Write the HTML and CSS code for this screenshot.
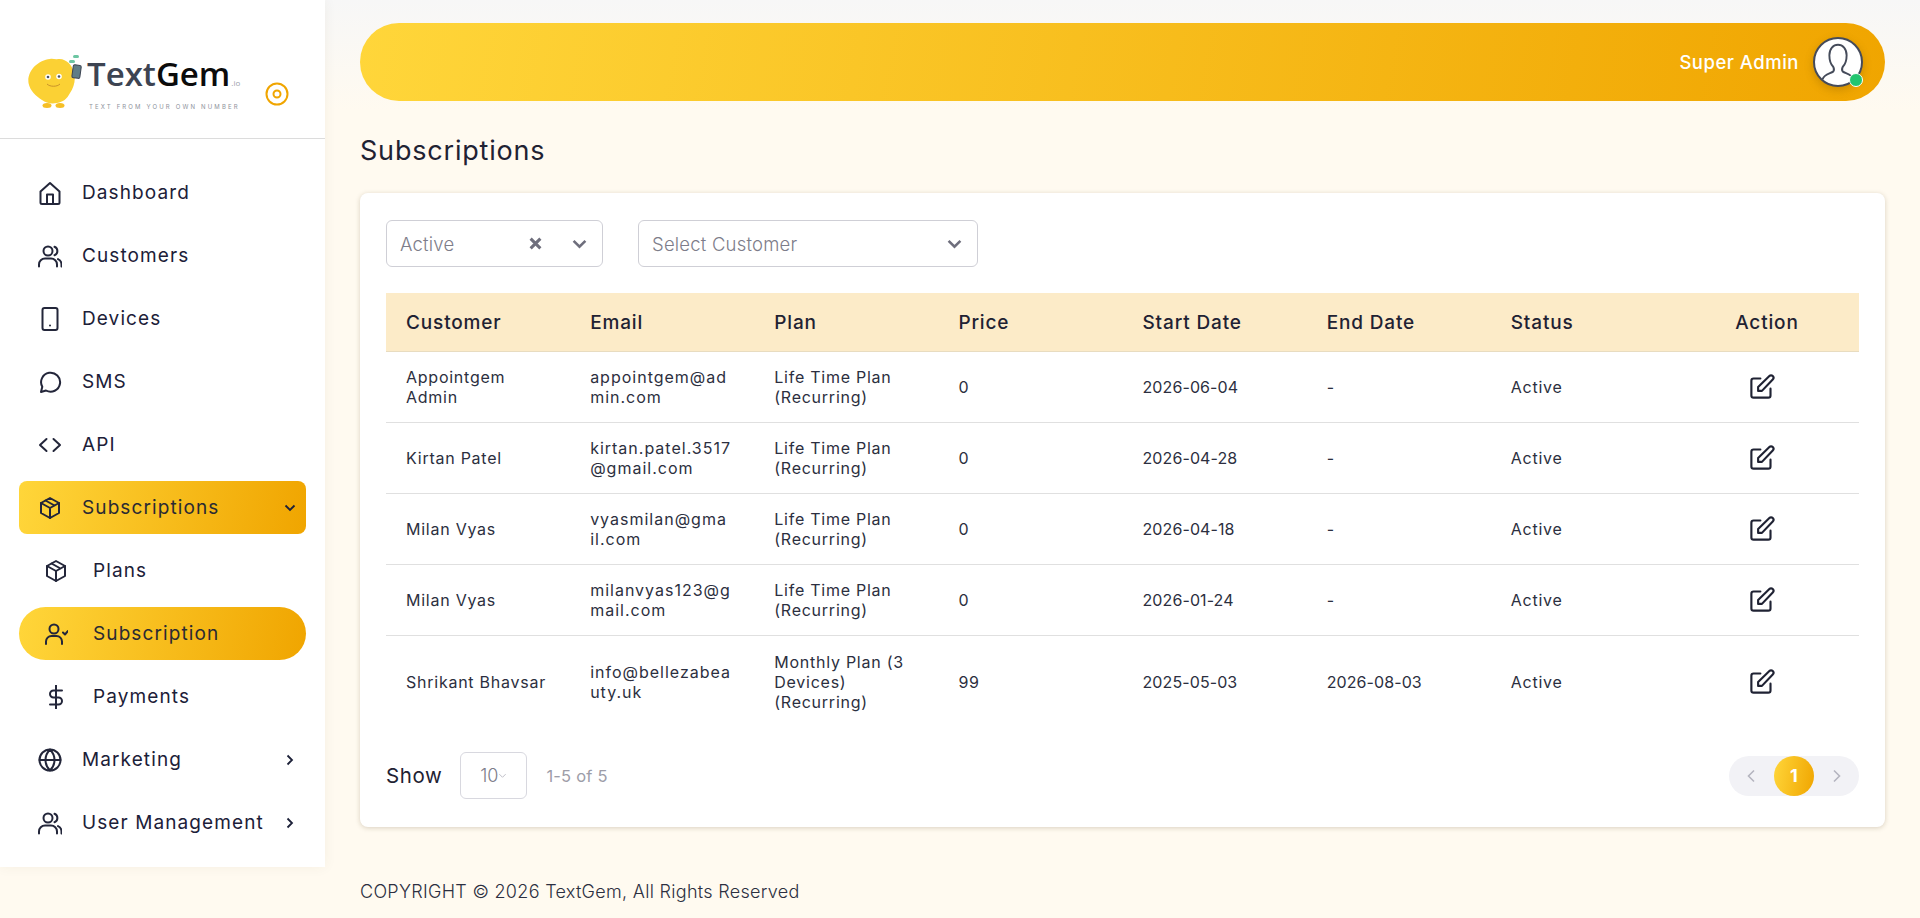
FILE: index.html
```html
<!DOCTYPE html>
<html>
<head>
    <title>Subscriptions - TextGem</title>
    <link rel="stylesheet" href="styles.css">
</head>
<body>
    <svg class="icon-defs" width="0" height="0">
        <symbol id="i-box" viewBox="0 0 24 24"><path d="M12 2l9 5v10l-9 5-9-5V7z"/><path d="M3 7l9 5 9-5M12 12v10M7.500 4.500l9 5"/></symbol>
        <symbol id="i-users" viewBox="0 0 24 24"><circle cx="10" cy="7" r="4.500"/><path d="M1 22.500v-2a6 6 0 0 1 6-6h6a6 6 0 0 1 6 6v2M16.500 2.800a4.500 4.500 0 0 1 0 8.400M23.500 22.500v-2a6 6 0 0 0-3.500-5.400"/></symbol>
        <symbol id="i-edit" viewBox="0 0 24 24"><path d="M11 4H5a2 2 0 0 0-2 2v13a2 2 0 0 0 2 2h13a2 2 0 0 0 2-2v-6"/><path d="M9 15v-3.500L19 1.800a2 2 0 0 1 3 3L12.400 15z"/></symbol>
    </svg>

    <div class="layout">
        <aside class="sidebar">
            <div class="brand">
                <div class="logo">
                    <svg class="mascot" viewBox="0 0 54 54">
                        <path class="mascot-body" d="M22 4c3-1 5 1 8 0 8-1 14 6 16 13 2 8 0 15-4 21-3 6-7 9-13 10-6 1-11 0-15-3C8 41 2 36 0.500 28-1 16 10 5 22 4z"/>
                        <ellipse class="mascot-foot" cx="19" cy="50.500" rx="4.500" ry="2.500"/>
                        <ellipse class="mascot-foot" cx="32" cy="50.500" rx="4.500" ry="2.500"/>
                        <circle class="mascot-eye" cx="20" cy="22" r="2.800"/>
                        <circle class="mascot-eye" cx="31" cy="21.500" r="2.800"/>
                        <circle class="mascot-pupil" cx="20" cy="22" r="1.300"/>
                        <circle class="mascot-pupil" cx="31" cy="21.500" r="1.300"/>
                        <path class="mascot-mouth" d="M19 29c3 3 10 3 13 0"/>
                        <rect class="mascot-phone" x="44.500" y="10" width="8" height="13" rx="1.500" transform="rotate(8 48 17)"/>
                        <rect class="mascot-chat" x="45" y="0" width="6" height="3" rx="1.500"/>
                        <rect class="mascot-chat" x="41" y="5" width="6" height="3" rx="1.500"/>
                    </svg>
                    <div class="logo-text">
                        <div class="logo-name"><span class="logo-text-dark">Text</span>Gem<span class="logo-io">.io</span></div>
                        <div class="logo-tag">TEXT FROM YOUR OWN NUMBER</div>
                    </div>
                </div>
                <svg class="collapse" viewBox="0 0 24 24"><circle cx="12" cy="12" r="10.500"/><circle cx="12" cy="12" r="3.500"/></svg>
            </div>

            <nav class="nav">
                <a class="nav-item">
                    <svg class="nav-icon" viewBox="0 0 24 24"><path d="M2.500 10.500L12 2l9.500 8.500V21.500a1.500 1.500 0 0 1-1.500 1.500H4a1.500 1.500 0 0 1-1.500-1.500z"/><path d="M9 23V13.500h6V23"/></svg>
                    Dashboard
                </a>
                <a class="nav-item">
                    <svg class="nav-icon"><use href="#i-users"/></svg>
                    Customers
                </a>
                <a class="nav-item">
                    <svg class="nav-icon" viewBox="0 0 24 24"><rect x="4.500" y="1" width="15" height="22" rx="2"/><path d="M12 18.500h.01"/></svg>
                    Devices
                </a>
                <a class="nav-item">
                    <svg class="nav-icon" viewBox="0 0 24 24"><path d="M3 22l1.300-5.200A9.500 9.500 0 1 1 8 20.500z"/></svg>
                    SMS
                </a>
                <a class="nav-item">
                    <svg class="nav-icon" viewBox="0 0 24 24"><path d="M8.500 6L2 12l6.500 6M15.500 6L22 12l-6.500 6"/></svg>
                    API
                </a>
                <a class="nav-item nav-open">
                    <svg class="nav-icon"><use href="#i-box"/></svg>
                    Subscriptions
                    <svg class="nav-arrow" viewBox="0 0 12 12"><path d="M1.500 3.500L6 8l4.500-4.500"/></svg>
                </a>
                <a class="nav-item nav-sub">
                    <svg class="nav-icon"><use href="#i-box"/></svg>
                    Plans
                </a>
                <a class="nav-item nav-sub nav-current">
                    <svg class="nav-icon" viewBox="0 0 24 24"><circle cx="10" cy="7" r="4.500"/><path d="M2 22v-2.500A5.500 5.500 0 0 1 7.500 14h5a5.500 5.500 0 0 1 5.500 5.500V22M19 10.500l2 2 3-3.500"/></svg>
                    Subscription
                </a>
                <a class="nav-item nav-sub">
                    <svg class="nav-icon" viewBox="0 0 24 24"><path d="M12 0.500v23M18 5.500H9.500a3.500 3.500 0 0 0 0 7h5a3.500 3.500 0 0 1 0 7H6"/></svg>
                    Payments
                </a>
                <a class="nav-item">
                    <svg class="nav-icon" viewBox="0 0 24 24"><circle cx="12" cy="12" r="10.500"/><path d="M1.500 12h21M12 1.500c3 3 4.500 6.500 4.500 10.500S15 19.500 12 22.500C9 19.500 7.500 16 7.500 12S9 4.500 12 1.500z"/></svg>
                    Marketing
                    <svg class="nav-arrow" viewBox="0 0 12 12"><path d="M3.500 1.500L8 6l-4.500 4.500"/></svg>
                </a>
                <a class="nav-item">
                    <svg class="nav-icon"><use href="#i-users"/></svg>
                    User Management
                    <svg class="nav-arrow" viewBox="0 0 12 12"><path d="M3.500 1.500L8 6l-4.500 4.500"/></svg>
                </a>
            </nav>
        </aside>

        <div class="main">
            <header class="topbar">
                <span class="topbar-name">Super Admin</span>
                <div class="avatar">
                    <svg viewBox="0 0 48 48"><path d="M8 42c1-5 8-6 11-8 1-1 1-3 0-5-3-3-4-7-4-12 0-7 4-11 9-11s9 4 9 11c0 5-1 9-4 12-1 2-1 4 0 5 3 2 10 3 11 8"/></svg>
                    <span class="avatar-dot"></span>
                </div>
            </header>

            <h1 class="page-title">Subscriptions</h1>

            <section class="card">
                <div class="filters">
                    <div class="select select-status">
                        <span class="select-value">Active</span>
                        <svg class="select-clear" viewBox="0 0 12 12"><path d="M1.500 1.500l9 9M10.500 1.500l-9 9"/></svg>
                        <svg class="select-arrow" viewBox="0 0 14 14"><path d="M1.500 4.500L7 10l5.500-5.500"/></svg>
                    </div>
                    <div class="select select-customer">
                        <span class="select-value">Select Customer</span>
                        <svg class="select-arrow" viewBox="0 0 14 14"><path d="M1.500 4.500L7 10l5.500-5.500"/></svg>
                    </div>
                </div>

                <table class="data-table">
                    <thead>
                        <tr>
                            <th>Customer</th>
                            <th>Email</th>
                            <th>Plan</th>
                            <th>Price</th>
                            <th>Start Date</th>
                            <th>End Date</th>
                            <th>Status</th>
                            <th class="col-action">Action</th>
                        </tr>
                    </thead>
                    <tbody>
                        <tr>
                            <td>Appointgem<br>Admin</td>
                            <td class="col-email">appointgem@ad<br>min.com</td>
                            <td>Life Time Plan<br>(Recurring)</td>
                            <td>0</td>
                            <td class="col-date">2026-06-04</td>
                            <td class="col-date">-</td>
                            <td>Active</td>
                            <td class="col-action"><svg class="edit-icon"><use href="#i-edit"/></svg></td>
                        </tr>
                        <tr>
                            <td>Kirtan Patel</td>
                            <td class="col-email">kirtan.patel.3517<br>@gmail.com</td>
                            <td>Life Time Plan<br>(Recurring)</td>
                            <td>0</td>
                            <td class="col-date">2026-04-28</td>
                            <td class="col-date">-</td>
                            <td>Active</td>
                            <td class="col-action"><svg class="edit-icon"><use href="#i-edit"/></svg></td>
                        </tr>
                        <tr>
                            <td>Milan Vyas</td>
                            <td class="col-email">vyasmilan@gma<br>il.com</td>
                            <td>Life Time Plan<br>(Recurring)</td>
                            <td>0</td>
                            <td class="col-date">2026-04-18</td>
                            <td class="col-date">-</td>
                            <td>Active</td>
                            <td class="col-action"><svg class="edit-icon"><use href="#i-edit"/></svg></td>
                        </tr>
                        <tr>
                            <td>Milan Vyas</td>
                            <td class="col-email">milanvyas123@g<br>mail.com</td>
                            <td>Life Time Plan<br>(Recurring)</td>
                            <td>0</td>
                            <td class="col-date">2026-01-24</td>
                            <td class="col-date">-</td>
                            <td>Active</td>
                            <td class="col-action"><svg class="edit-icon"><use href="#i-edit"/></svg></td>
                        </tr>
                        <tr>
                            <td>Shrikant Bhavsar</td>
                            <td class="col-email">info@bellezabea<br>uty.uk</td>
                            <td>Monthly Plan (3<br>Devices)<br>(Recurring)</td>
                            <td>99</td>
                            <td class="col-date">2025-05-03</td>
                            <td class="col-date">2026-08-03</td>
                            <td>Active</td>
                            <td class="col-action"><svg class="edit-icon"><use href="#i-edit"/></svg></td>
                        </tr>
                    </tbody>
                </table>

                <div class="table-footer">
                    <span class="show-label">Show</span>
                    <div class="page-size">10<svg viewBox="0 0 10 10"><path d="M1.500 3.500l3.500 3.500 3.500-3.500"/></svg></div>
                    <span class="page-count">1-5 of 5</span>
                    <div class="pager">
                        <svg class="pager-arrow" viewBox="0 0 10 14"><path d="M8 1.500L2.500 7 8 12.500"/></svg>
                        <span class="pager-current">1</span>
                        <svg class="pager-arrow" viewBox="0 0 10 14"><path d="M2 1.500L7.500 7 2 12.500"/></svg>
                    </div>
                </div>
            </section>
        </div>
    </div>

    <footer class="footer">COPYRIGHT © 2026 TextGem, All Rights Reserved</footer>
</body>
</html>
```

FILE: styles.css
```css
* {
    box-sizing: border-box;
}

body {
    margin: 0;
    height: 918px;
    overflow: hidden;
    font-family: Inter, "Open Sans", sans-serif;
    color: #1f2233;
    background: linear-gradient(180deg, #f7f7f7 0, #fffaf0 110px);
}

.icon-defs {
    position: absolute;
}

.layout {
    display: flex;
    height: 867px;
}

/* sidebar */
.sidebar {
    width: 325px;
    flex-shrink: 0;
    background: #fff;
    box-shadow: 0 0 12px rgba(90, 70, 20, 0.06);
}

.brand {
    display: flex;
    align-items: flex-start;
    height: 139px;
    padding: 55px 0 0 28px;
    border-bottom: 1px solid #dcdcdc;
}

.logo {
    display: flex;
    width: 238px;
}

.mascot {
    width: 54px;
    height: 54px;
    flex-shrink: 0;
}

.mascot-body {
    fill: #fbd134;
}

.mascot-foot {
    fill: #f6bf26;
}

.mascot-eye {
    fill: #fff;
}

.mascot-pupil {
    fill: #4b5563;
}

.mascot-mouth {
    fill: none;
    stroke: #c9932a;
    stroke-width: 1;
}

.mascot-phone {
    fill: #5f7d86;
    stroke: #3d4452;
}

.mascot-chat {
    fill: #6cc6a2;
}

.logo-text {
    margin-left: 5px;
    padding-top: 1px;
}

.logo-name {
    font-family: "Open Sans", sans-serif;
    font-size: 33px;
    line-height: 36px;
    font-weight: 600;
    color: #0b0b0b;
    white-space: nowrap;
}

.logo-text-dark {
    color: #3d4452;
}

.logo-io {
    font-size: 8px;
    font-weight: 400;
    color: #9aa0aa;
    margin-left: 1px;
}

.logo-tag {
    margin: 2px 0 0 2px;
    font-size: 6px;
    line-height: 8px;
    letter-spacing: 2.150px;
    color: #8d929b;
    white-space: nowrap;
}

.collapse {
    width: 24px;
    height: 24px;
    margin: 27px 0 0 -1px;
    fill: none;
    stroke: #f0a500;
    stroke-width: 2;
}

.nav {
    display: flex;
    flex-direction: column;
    gap: 10px;
    padding: 27px 19px 0;
}

.nav-item {
    display: flex;
    align-items: center;
    height: 53px;
    padding-left: 19px;
    font-size: 19px;
    letter-spacing: 1.100px;
    font-weight: 400;
    color: #1c2038;
}

.nav-icon {
    width: 24px;
    height: 24px;
    margin-right: 20px;
    flex-shrink: 0;
    fill: none;
    stroke: #23263a;
    stroke-width: 2;
    stroke-linecap: round;
    stroke-linejoin: round;
}

.nav-sub {
    padding-left: 25px;
}

.nav-sub .nav-icon {
    margin-right: 25px;
}

.nav-open,
.nav-current {
    background: linear-gradient(100deg, #ffd63a 0, #f0a500 100%);
    color: #2a2a33;
}

.nav-open {
    border-radius: 8px;
}

.nav-current {
    border-radius: 27px;
}

.nav-arrow {
    width: 12px;
    height: 12px;
    margin-left: auto;
    margin-right: 10px;
    fill: none;
    stroke: #1c2038;
    stroke-width: 1.800;
}

/* main column */
.main {
    flex: 1;
    min-width: 0;
    padding: 23px 35px 0 35px;
}

.topbar {
    display: flex;
    align-items: center;
    justify-content: flex-end;
    height: 78px;
    padding-right: 22px;
    border-radius: 39px;
    background: linear-gradient(100deg, #ffd63a 0, #f0a500 100%);
}

.topbar-name {
    margin-right: 14px;
    font-size: 18.500px;
    letter-spacing: 0.500px;
    font-weight: 500;
    color: #fff;
}

.avatar {
    position: relative;
    width: 50px;
    height: 50px;
    border-radius: 50%;
    border: 2px solid #454b5a;
    background: #fff;
    box-shadow: 0 3px 8px rgba(120, 80, 0, 0.3);
}

.avatar svg {
    display: block;
    width: 46px;
    height: 46px;
    fill: none;
    stroke: #454b5a;
    stroke-width: 2;
}

.avatar-dot {
    position: absolute;
    right: -2px;
    bottom: -2px;
    width: 14px;
    height: 14px;
    border-radius: 50%;
    background: #22c56f;
    border: 1px solid #fff;
}

.page-title {
    margin: 35px 0 27px;
    font-size: 27px;
    line-height: 30px;
    font-weight: 400;
    letter-spacing: 0.800px;
    color: #1f2233;
}

.card {
    height: 634px;
    padding: 27px 26px 0;
    border-radius: 8px;
    background: #fff;
    box-shadow: 0 1px 5px rgba(80, 60, 20, 0.22);
}

.filters {
    display: flex;
    gap: 35px;
    margin-bottom: 26px;
}

.select {
    display: flex;
    align-items: center;
    height: 47px;
    padding: 0 13px;
    border: 1px solid #cfcfd6;
    border-radius: 6px;
}

.select-status {
    width: 217px;
}

.select-customer {
    width: 340px;
}

.select-value {
    flex: 1;
    font-size: 18.500px;
    font-weight: 350;
    letter-spacing: 0.200px;
    color: #7d7d8a;
}

.select-clear {
    width: 13px;
    height: 13px;
    margin-right: 30px;
    fill: none;
    stroke: #6e6e7c;
    stroke-width: 2.800;
}

.select-arrow {
    width: 15px;
    height: 15px;
    margin-right: 2px;
    fill: none;
    stroke: #6e6e7c;
    stroke-width: 2.400;
}

.data-table {
    width: 100%;
    border-collapse: collapse;
    table-layout: fixed;
}

.data-table th {
    height: 58px;
    padding: 2px 20px 0;
    text-align: left;
    font-size: 19px;
    font-weight: 550;
    letter-spacing: 0.850px;
    color: #1f2233;
    background: #fcebc8;
    border-bottom: 1px solid #e8dcc0;
}

.data-table td {
    height: 71px;
    padding: 0 20px;
    font-size: 16px;
    line-height: 20px;
    letter-spacing: 0.750px;
    white-space: nowrap;
    color: #2c2f40;
    border-bottom: 1px solid #e0e0e0;
}

.data-table tbody tr:last-child td {
    height: 93px;
    border-bottom: none;
}

.data-table .col-email {
    letter-spacing: 1px;
}

.data-table .col-date {
    letter-spacing: 0.100px;
}

.data-table .col-action {
    text-align: center;
}

.edit-icon {
    display: inline-block;
    width: 27px;
    height: 27px;
    margin: 2px 10px 0 0;
    vertical-align: middle;
    fill: none;
    stroke: #1f2233;
    stroke-width: 1.900;
    stroke-linecap: round;
    stroke-linejoin: round;
}

.table-footer {
    display: flex;
    align-items: center;
    margin-top: 24px;
}

.show-label {
    font-size: 20.500px;
    letter-spacing: 0.600px;
    font-weight: 400;
    color: #1f2233;
}

.page-size {
    display: flex;
    align-items: center;
    justify-content: center;
    width: 67px;
    height: 47px;
    margin-left: 18px;
    font-size: 18px;
    font-weight: 350;
    color: #7d7d8a;
    border: 1px solid #d8d8df;
    border-radius: 6px;
}

.page-size svg {
    width: 9px;
    height: 9px;
    fill: none;
    stroke: #b8b8c2;
    stroke-width: 1;
}

.page-count {
    margin-left: 19px;
    font-size: 16.500px;
    letter-spacing: 0.200px;
    color: #9d9da8;
}

.pager {
    display: flex;
    align-items: center;
    justify-content: space-between;
    width: 130px;
    height: 40px;
    margin-left: auto;
    padding: 0 17px;
    border-radius: 20px;
    background: #f2f2f6;
}

.pager-arrow {
    width: 10px;
    height: 14px;
    fill: none;
    stroke: #b5b5bf;
    stroke-width: 1.600;
}

.pager-current {
    display: flex;
    align-items: center;
    justify-content: center;
    width: 40px;
    height: 40px;
    border-radius: 50%;
    font-size: 18px;
    font-weight: 700;
    color: #fff;
    background: linear-gradient(100deg, #ffd63a 0, #f0a500 100%);
}

.footer {
    padding: 14px 0 0 360px;
    font-size: 18px;
    font-weight: 350;
    letter-spacing: 0.300px;
    color: #2c2f40;
}
```
